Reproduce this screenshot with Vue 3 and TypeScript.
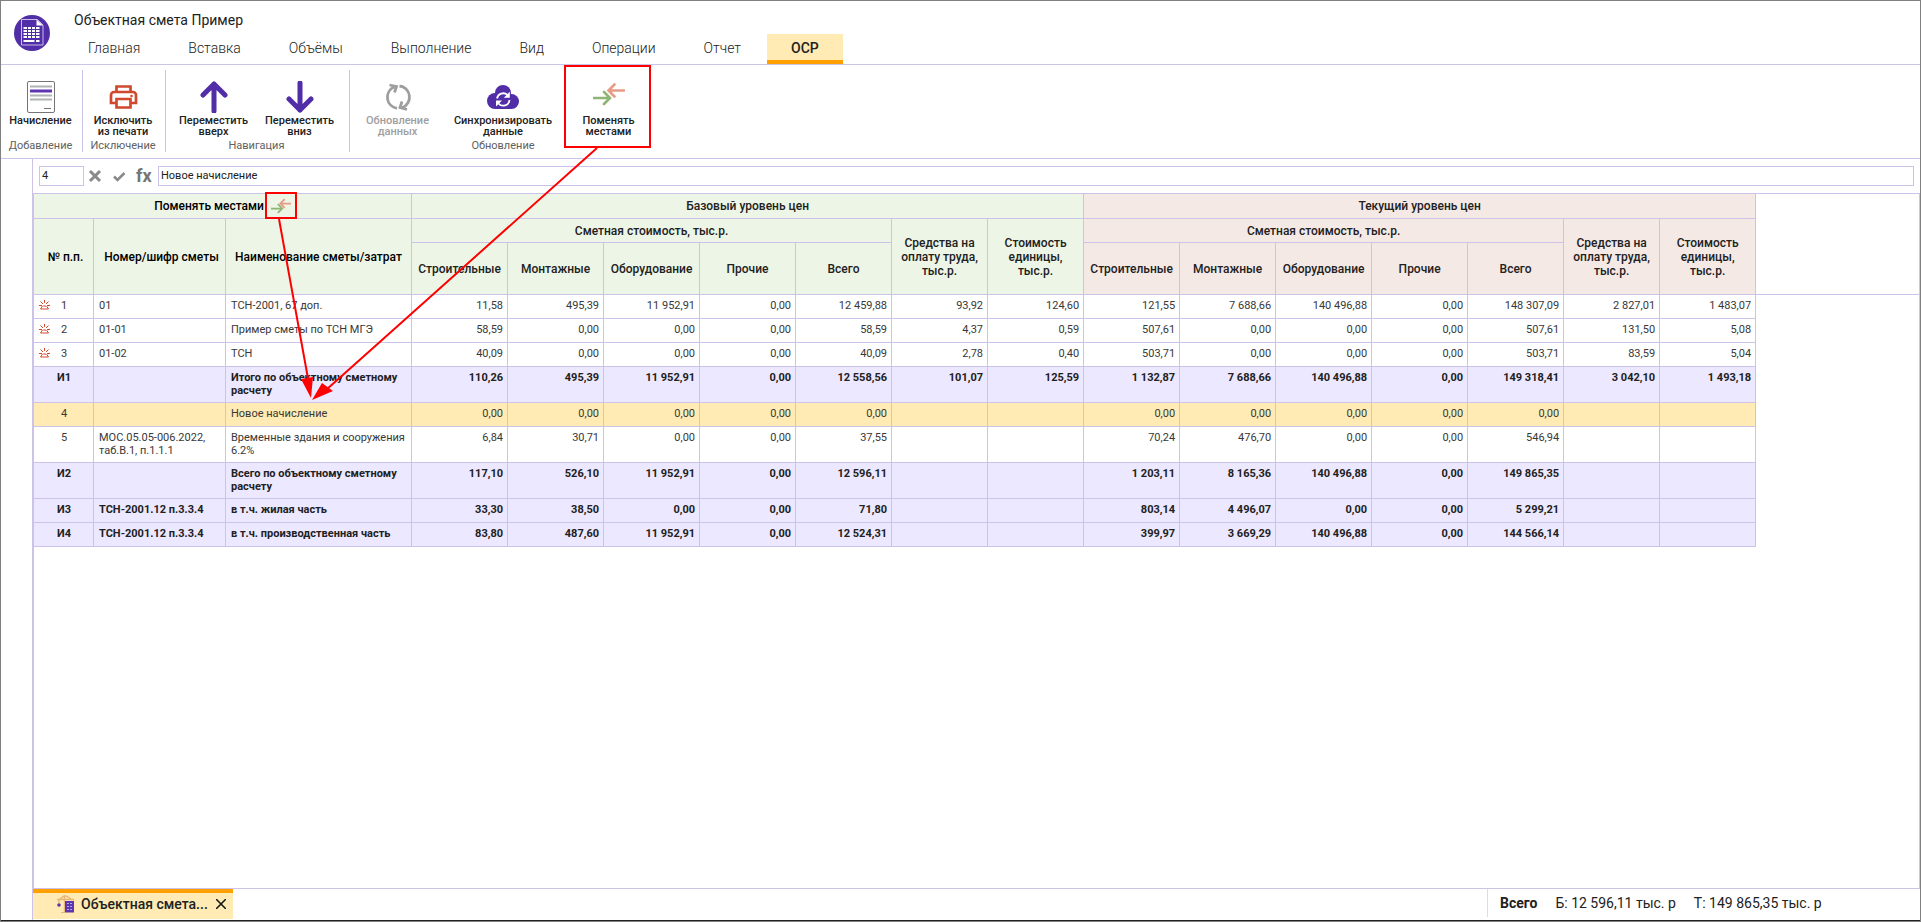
<script setup lang="ts">
interface Row { n: string; code: string; name: string; base: string[]; cur: string[]; kind?: 'total' | 'active'; mark?: boolean }

const tabs = ['Главная', 'Вставка', 'Объёмы', 'Выполнение', 'Вид', 'Операции', 'Отчет', 'ОСР']
const costs = ['Строительные', 'Монтажные', 'Оборудование', 'Прочие', 'Всего']
const levels = [
  { title: 'Базовый уровень цен', cls: 'base' },
  { title: 'Текущий уровень цен', cls: 'cur' },
]
const rows: Row[] = [
  { n: '1', code: '01', name: 'ТСН-2001, 67 доп.', mark: true, base: ['11,58', '495,39', '11 952,91', '0,00', '12 459,88', '93,92', '124,60'], cur: ['121,55', '7 688,66', '140 496,88', '0,00', '148 307,09', '2 827,01', '1 483,07'] },
  { n: '2', code: '01-01', name: 'Пример сметы по ТСН МГЭ', mark: true, base: ['58,59', '0,00', '0,00', '0,00', '58,59', '4,37', '0,59'], cur: ['507,61', '0,00', '0,00', '0,00', '507,61', '131,50', '5,08'] },
  { n: '3', code: '01-02', name: 'ТСН', mark: true, base: ['40,09', '0,00', '0,00', '0,00', '40,09', '2,78', '0,40'], cur: ['503,71', '0,00', '0,00', '0,00', '503,71', '83,59', '5,04'] },
  { n: 'И1', code: '', name: 'Итого по объектному сметному расчету', kind: 'total', base: ['110,26', '495,39', '11 952,91', '0,00', '12 558,56', '101,07', '125,59'], cur: ['1 132,87', '7 688,66', '140 496,88', '0,00', '149 318,41', '3 042,10', '1 493,18'] },
  { n: '4', code: '', name: 'Новое начисление', kind: 'active', base: ['0,00', '0,00', '0,00', '0,00', '0,00', '', ''], cur: ['0,00', '0,00', '0,00', '0,00', '0,00', '', ''] },
  { n: '5', code: 'МОС.05.05-006.2022, таб.В.1, п.1.1.1', name: 'Временные здания и сооружения 6.2%', base: ['6,84', '30,71', '0,00', '0,00', '37,55', '', ''], cur: ['70,24', '476,70', '0,00', '0,00', '546,94', '', ''] },
  { n: 'И2', code: '', name: 'Всего по объектному сметному расчету', kind: 'total', base: ['117,10', '526,10', '11 952,91', '0,00', '12 596,11', '', ''], cur: ['1 203,11', '8 165,36', '140 496,88', '0,00', '149 865,35', '', ''] },
  { n: 'И3', code: 'ТСН-2001.12 п.3.3.4', name: 'в т.ч. жилая часть', kind: 'total', base: ['33,30', '38,50', '0,00', '0,00', '71,80', '', ''], cur: ['803,14', '4 496,07', '0,00', '0,00', '5 299,21', '', ''] },
  { n: 'И4', code: 'ТСН-2001.12 п.3.3.4', name: 'в т.ч. производственная часть', kind: 'total', base: ['83,80', '487,60', '11 952,91', '0,00', '12 524,31', '', ''], cur: ['399,97', '3 669,29', '140 496,88', '0,00', '144 566,14', '', ''] },
]
</script>

<template>
  <div class="app">
    <header class="top">
      <svg class="logo" viewBox="0 0 36 36" aria-hidden="true">
        <circle cx="18" cy="18" r="18" fill="#512da8" />
        <path d="M7.500 4.500h16l5.500 5.500v20H7.500z" fill="none" stroke="#c9bce8" />
        <path d="M22.500 4.500v6H29z" fill="#fff" />
        <path d="M9.500 12h16v11h-16z" fill="#fff" />
        <path d="M9 14.500h17M9 17.500h17M9 20.500h17M13.500 11v12M17.500 11v12M21.500 11v12" stroke="#512da8" />
        <path d="M9.500 25h11v2h-11zM22 25h3.500v2H22z" fill="#fff" />
      </svg>
      <div class="heading">
        <h1>Объектная смета Пример</h1>
        <nav class="tabs">
          <button v-for="t in tabs" :key="t" type="button" :class="{ on: t === 'ОСР' }">{{ t }}</button>
        </nav>
      </div>
    </header>

    <section class="ribbon">
      <div class="group g1">
        <div class="tools">
          <button type="button">
            <svg viewBox="0 0 32 32"><rect x="2.500" y=".5" width="27" height="31" rx="1.500" fill="#fff" stroke="#757575" /><path d="M5 5.500h22M5 14.500h22M5 18.500h22" stroke="#b0b4b4" stroke-width="2" /><path d="M5 10h22" stroke="#5e35b1" stroke-width="3" /><path d="M19 27.500h7" stroke="#757575" /></svg>
            <span>Начисление</span>
          </button>
        </div>
        <p>Добавление</p>
      </div>
      <div class="group g2">
        <div class="tools">
          <button type="button">
            <svg viewBox="0 0 32 32"><g fill="none" stroke="#d0492c" stroke-width="2.700"><path d="M9.500 11V5.500h14V11M9 22H4v-8a3 3 0 0 1 3-3h19a3 3 0 0 1 3 3v8h-5M9.500 18h14v8.500h-14z" /></g><circle cx="24.500" cy="15" r="1.300" fill="#d0492c" /></svg>
            <span>Исключить<br />из печати</span>
          </button>
        </div>
        <p>Исключение</p>
      </div>
      <div class="group g3">
        <div class="tools">
          <button type="button">
            <svg viewBox="0 0 32 32"><path d="M16 30V3M5 14 16 3l11 11" fill="none" stroke="#512da8" stroke-width="5" stroke-linecap="round" stroke-linejoin="round" /></svg>
            <span>Переместить<br />вверх</span>
          </button>
          <button type="button">
            <svg viewBox="0 0 32 32"><path d="M16 2v27M5 18l11 11 11-11" fill="none" stroke="#512da8" stroke-width="5" stroke-linecap="round" stroke-linejoin="round" /></svg>
            <span>Переместить<br />вниз</span>
          </button>
        </div>
        <p>Навигация</p>
      </div>
      <div class="group g4">
        <div class="tools">
          <button type="button" disabled>
            <svg viewBox="0 0 32 32"><g fill="none" stroke="#9e9e9e" stroke-width="2.800"><path d="M15 27.300A11.200 11.200 0 0 1 12 6M7.500 4l7 1.500-2 6M17.500 5A11.200 11.200 0 0 1 20.500 26.500M25 28.500l-7-2 2-6" /></g></svg>
            <span>Обновление<br />данных</span>
          </button>
          <button type="button" class="wide">
            <svg viewBox="0 0 32 32"><g fill="#512da8"><circle cx="8" cy="20" r="8" /><circle cx="16" cy="12" r="8" /><circle cx="24.500" cy="20.500" r="7.500" /><path d="M8 14h16v14H8z" /></g><path d="M10 17.500a6.300 6.300 0 0 1 10.500-3.500M22.500 19a6.300 6.300 0 0 1-11 3.500" fill="none" stroke="#fff" stroke-width="1.800" /><path d="M22.800 10.800v6h-6zM9 25.500v-6h6z" fill="#fff" /></svg>
            <span>Синхронизировать<br />данные</span>
          </button>
          <button type="button">
            <svg viewBox="0 0 32 32"><g fill="none" stroke-width="2.600" stroke-linecap="round"><path d="M1 17h16M11 11l6 6-6 6" stroke="#8fb573" /><path d="M31 9.500H15.500M21.500 3.500l-6 6 6 6" stroke="#e79b84" /></g></svg>
            <span>Поменять<br />местами</span>
          </button>
        </div>
        <p>Обновление</p>
      </div>
    </section>

    <div class="work">
      <main class="sheet">
        <div class="formula">
          <input class="cell" aria-label="Номер строки" value="4" />
          <button type="button" aria-label="Отменить"><svg viewBox="0 0 14 14"><path d="M2 2l10 10M12 2 2 12" stroke="#8a8a8a" stroke-width="3" /></svg></button>
          <button type="button" aria-label="Принять"><svg viewBox="0 0 14 14"><path d="M2 7.500 5.500 11l7-7" fill="none" stroke="#8a8a8a" stroke-width="2.600" /></svg></button>
          <span class="fx">fx</span>
          <input class="value" aria-label="Значение" value="Новое начисление" />
        </div>
        <div class="grid">
          <table>
            <colgroup><col class="c1" /><col class="c2" /><col class="c3" /><col v-for="i in 14" :key="i" class="c4" /></colgroup>
            <thead>
              <tr class="h1">
                <th colspan="3" class="base dark">
                  <span class="swaphead">Поменять местами
                    <svg viewBox="0 0 32 32"><g fill="none" stroke-width="2.800"><path d="M0 20h17M11 13l7 7-7 7" stroke="#8fb573" /><path d="M32 12H16M22 5l-7 7 7 7" stroke="#e79b84" /></g></svg>
                  </span>
                </th>
                <th v-for="l in levels" :key="l.cls" colspan="7" :class="l.cls">{{ l.title }}</th>
              </tr>
              <tr class="h2">
                <th rowspan="2" class="base dark num">№ п.п.</th>
                <th rowspan="2" class="base dark num">Номер/шифр сметы</th>
                <th rowspan="2" class="base dark">Наименование сметы/затрат</th>
                <template v-for="l in levels" :key="l.cls">
                  <th colspan="5" :class="l.cls">Сметная стоимость, тыс.р.</th>
                  <th rowspan="2" :class="l.cls">Средства на<br />оплату труда,<br />тыс.р.</th>
                  <th rowspan="2" :class="l.cls">Стоимость<br />единицы,<br />тыс.р.</th>
                </template>
              </tr>
              <tr class="h3">
                <template v-for="l in levels" :key="l.cls">
                  <th v-for="c in costs" :key="c" :class="l.cls">{{ c }}</th>
                </template>
              </tr>
            </thead>
            <tbody>
              <tr v-for="r in rows" :key="r.n" :class="r.kind">
                <td class="no">
                  <svg v-if="r.mark" viewBox="0 0 11 10"><path d="M0 5.500h3M8 5.500h3M5.500 0v3M1.500 1.500 4 4M9.500 1.500 7 4M3.500 6 1.500 9M7.500 6l2 3M1.500 9h8M4 6h3" fill="none" stroke="#d24a2b" /></svg>
                  {{ r.n }}
                </td>
                <td>{{ r.code }}</td>
                <td>{{ r.name }}</td>
                <td v-for="(v, i) in [...r.base, ...r.cur]" :key="i" class="r">{{ v }}</td>
              </tr>
            </tbody>
          </table>
          <div class="rest"></div>
        </div>
        <footer class="bottom">
          <div class="doc">
            <svg viewBox="0 0 18 18"><path d="M0 4.500h17M7.500 1v16M3 4l4-3h2l5 3M2 5v3" fill="none" stroke="#e8b878" stroke-width="1.400" /><path d="M8 6h9v11.500H8z" fill="#5e35b1" /><path d="M10 8.500h5M10 11.500h5M10 14.500h5" stroke="#b8a4e0" stroke-dasharray="2 1" /><circle cx="2" cy="10" r="1.800" fill="#5e35b1" /><path d="M4 17.500h4" stroke="#e8b878" /></svg>
            <span>Объектная смета...</span>
            <button type="button" aria-label="Закрыть"><svg viewBox="0 0 10 10"><path d="M0 0l10 10M10 0 0 10" stroke="#111" stroke-width="1.500" /></svg></button>
          </div>
          <div class="totals"><b>Всего</b><span>Б: 12 596,11 тыс. р</span><span>Т: 149 865,35 тыс. р</span></div>
        </footer>
      </main>
    </div>

    <svg class="notes" aria-hidden="true">
      <g fill="none" stroke="#f00" stroke-width="2">
        <rect x="565" y="66" width="85" height="81" />
        <rect x="266" y="193" width="30" height="25" />
        <path d="M279 219 309 384M597 148 326 390" />
      </g>
      <path d="M311 398 301 379l12-2zM312 400l10-17 11 8z" fill="#f00" />
    </svg>
  </div>
</template>

<style>
body { margin: 0; }
</style>
<style scoped>
.app {
  --line: #cdc2e8;
  position: relative; box-sizing: border-box; height: 100vh; display: flex; flex-direction: column;
  border: 1px solid #808080; background: #fff; color: #212121; overflow: hidden;
  font-family: Roboto, "Liberation Sans", sans-serif; font-size: 11px;
}
button { border: 0; padding: 0; background: none; font: inherit; color: inherit; }
svg { display: block; }
.top { display: flex; border-bottom: 1px solid var(--line); height: 63px; flex: none; }
.logo { width: 36px; height: 36px; margin: 14px 14px 0 13px; }
.heading { display: flex; flex-direction: column; justify-content: space-between; }
h1 { margin: 10px 0 0 10px; font-size: 14px; line-height: 18px; font-weight: 400; }
.tabs { display: flex; }
.tabs button { height: 30px; padding: 0 24px 2px; font-size: 14px; font-weight: 300; }
.tabs .on { background: #ffebb3; border-bottom: 4px solid #ffa000; border-top: 2px solid #ffebb3; padding: 0 24px; margin-left: 2px; font-weight: 500; }
.ribbon { display: flex; align-items: stretch; height: 93px; flex: none; border-bottom: 1px solid var(--line); }
.group { margin: 5px 0 6px; border-right: 1px solid var(--line); display: flex; flex-direction: column; justify-content: space-between; box-sizing: border-box; padding-right: 2px; }
.g4 { border: 0; padding: 0; }
.g1 { width: 82px; } .g2 { width: 83px; } .g3 { width: 184px; }
.tools { display: flex; justify-content: center; padding-top: 11px; }
.tools button { width: 86px; line-height: 11px; font-weight: 500; display: flex; flex-direction: column; align-items: center; gap: 2px; }
.g1 .tools button, .g2 .tools button { width: 100%; }
.tools button svg { width: 32px; height: 32px; }
.tools button:disabled { color: #9e9e9e; }
.g4 .tools button { width: 95px; }
.g4 .tools .wide { width: 116px; }
.group p { margin: 0; text-align: center; color: #616161; line-height: 12px; }
.work { flex: 1; min-height: 0; display: flex; padding-left: 31px; border-bottom: 1px solid #212121; }
.sheet { flex: 1; min-width: 0; display: flex; flex-direction: column; border-left: 1px solid var(--line); }
.formula { display: flex; align-items: center; padding: 7px 6px; }
.formula input { box-sizing: border-box; height: 20px; border: 1px solid var(--line); padding: 0 2px 2px; font: inherit; color: #212121; outline: 0; }
.formula .cell { width: 45px; margin-right: 4px; }
.formula .value { flex: 1; }
.formula button { width: 24px; display: grid; place-items: center start; }
.formula button svg { width: 14px; height: 14px; }
.fx { width: 22px; font-size: 18px; line-height: 20px; font-weight: 700; color: #757575; }
.grid { flex: 1; min-height: 0; display: flex; align-items: flex-start; border: 1px solid var(--line); }
.rest { flex: 1; height: 100px; border-bottom: 1px solid var(--line); }
table { border-collapse: separate; border-spacing: 0; table-layout: fixed; width: 1722px; flex: none; }
.c1 { width: 60px; } .c2 { width: 132px; } .c3 { width: 186px; } .c4 { width: 96px; }
th, td { border-right: 1px solid var(--line); border-bottom: 1px solid var(--line); box-sizing: border-box; }
th { padding: 0; font-size: 12px; line-height: 14px; font-weight: 500; }
.dark { color: #000; } .num { padding-left: 4px; }
.base { background: #edf5e6; } .cur { background: #f5e9e6; }
.h1 th { height: 25px; } .h2 th { height: 24px; } .h3 th { height: 52px; }
.swaphead { display: inline-flex; align-items: center; gap: 7px; }
.swaphead svg { width: 20px; height: 20px; }
td { height: 24px; padding: 4px 5px 5px; line-height: 13px; vertical-align: top; color: #383838; }
.r { text-align: right; padding-right: 4px; }
.no { position: relative; text-align: center; padding-left: 6px; }
.no svg { position: absolute; left: 5px; top: 5px; width: 11px; height: 10px; }
.total td { background: #ece8ff; font-weight: 700; color: #212121; }
.active td { background: #ffebb3; }
.bottom { display: flex; justify-content: space-between; height: 31px; flex: none; }
.doc { display: flex; align-items: center; width: 200px; height: 30px; box-sizing: border-box; border-top: 4px solid #ffa000; background: #ffebb3; padding: 0 7px 4px 24px; font-size: 14px; font-weight: 500; }
.doc svg { width: 18px; height: 18px; margin-right: 6px; }
.doc span { flex: 1; white-space: nowrap; }
.doc button svg { width: 10px; height: 10px; margin: 0; }
.totals { display: flex; gap: 18px; align-items: center; width: 433px; height: 28px; box-sizing: border-box; border-left: 1px solid #ddd; padding-left: 12px; font-size: 14px; }
.totals b { font-weight: 700; }
.notes { position: absolute; left: -1px; top: -1px; width: 700px; height: 420px; pointer-events: none; }
</style>
